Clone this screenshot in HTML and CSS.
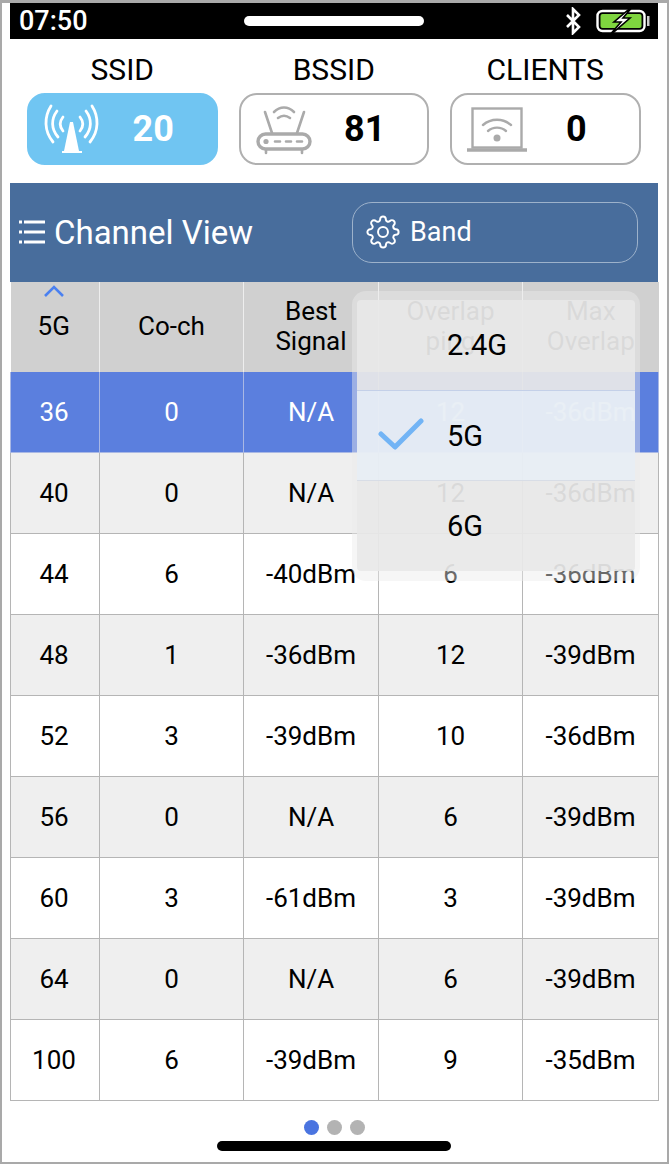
FILE: index.html
```html
<!DOCTYPE html>
<html lang="en">
<head>
  <meta charset="UTF-8"/>
  <meta name="viewport" content="width=device-width, initial-scale=1.0"/>
  <title>Channel View</title>
  <link rel="stylesheet" href="styles.css">
</head>
<body>
  <div class="phone">
    <!-- status bar -->
    <div class="status-bar">
      <span class="clock">07:50</span>
      <span class="notch"></span>
      <div class="status-icons">
        <svg class="bt-icon" viewBox="0 0 16 28" fill="none" stroke="#fff" stroke-width="2.6">
          <path d="M2 8l12 12-6 6V2l6 6L2 20"/>
        </svg>
        <svg class="battery-icon" viewBox="0 0 54 32">
          <rect x="1.500" y="6" width="47" height="20" rx="5" fill="none" stroke="#fff" stroke-width="2.400"/>
          <rect x="4.500" y="9" width="41" height="14" rx="2" fill="#7fd53f"/>
          <rect x="51" y="11" width="2.500" height="10" fill="#ccc"/>
          <path d="M38 0L18 17h7L12 32 34 13h-7z" fill="#fff" stroke="#000" stroke-width="1.600"/>
        </svg>
      </div>
    </div>

    <!-- counters -->
    <div class="stats">
      <div class="stat">
        <div class="stat-label">SSID</div>
        <div class="stat-card active">
          <svg class="stat-icon" viewBox="0 0 60 56" fill="none" stroke="#fff" stroke-width="2.800" stroke-linecap="round">
            <path d="M7 5C0 16 0 30 9 41"/>
            <path d="M13 10C7 18 7 28 14 36"/>
            <path d="M19 16C15 21 15 25 19 30"/>
            <path d="M48 5C55 16 55 30 46 41"/>
            <path d="M42 10C48 18 48 28 41 36"/>
            <path d="M36 16C40 21 40 25 36 30"/>
            <path d="M26 21h3l6 29H20z" fill="#fff" stroke="none"/>
            <path d="M18 51h20" stroke-linecap="butt" stroke-width="2"/>
          </svg>
          <span class="stat-value">20</span>
        </div>
      </div>
      <div class="stat">
        <div class="stat-label">BSSID</div>
        <div class="stat-card">
          <svg class="stat-icon" viewBox="0 0 60 56" fill="none" stroke="#aaa" stroke-width="2.600" stroke-linecap="round">
            <path d="M18 11c6-6 14-6 20 0"/>
            <path d="M22 17c4-3 8-3 12 0"/>
            <path d="M9 11l7 21"/>
            <path d="M48 11l-7 21"/>
            <rect x="2" y="33" width="52" height="15" rx="7.500" stroke-width="3.400"/>
            <circle cx="10" cy="40.500" r="2.600" fill="#aaa" stroke="none"/>
            <path d="M19 40.500h5M30 40.500h5M41 40.500h5"/>
            <path d="M10 49v3M46 49v3"/>
          </svg>
          <span class="stat-value">81</span>
        </div>
      </div>
      <div class="stat">
        <div class="stat-label">CLIENTS</div>
        <div class="stat-card">
          <svg class="stat-icon" viewBox="0 0 60 56" fill="none" stroke="#aaa" stroke-width="2.400" stroke-linecap="round">
            <rect x="5.500" y="7.500" width="49" height="39" stroke-linecap="butt"/>
            <path d="M0 49h60" stroke-width="3.400" stroke-linecap="butt"/>
            <path d="M16 24c8-7 20-7 28 0"/>
            <path d="M21 30c5-4.500 13-4.500 18 0"/>
            <circle cx="30" cy="37" r="3.500" fill="#aaa" stroke="none"/>
          </svg>
          <span class="stat-value">0</span>
        </div>
      </div>
    </div>

    <!-- title bar -->
    <div class="title-bar">
      <div class="title">
        <svg class="list-icon" viewBox="0 0 26 24" fill="none" stroke="#fff" stroke-width="3">
          <path d="M5 2h21M5 12h21M5 22h21"/>
          <path d="M0 2h3M0 12h3M0 22h3"/>
        </svg>
        <span>Channel View</span>
      </div>
      <div class="band-btn">
        <svg class="gear-icon" viewBox="0 0 24 24" fill="none" stroke="#fff" stroke-width="1.400" stroke-linejoin="round">
          <circle cx="12" cy="12" r="3.500"/>
          <path d="M19.4 15a1.65 1.65 0 0 0 .33 1.82l.06.06a2 2 0 0 1 0 2.83 2 2 0 0 1-2.83 0l-.06-.06a1.65 1.65 0 0 0-1.82-.33 1.65 1.65 0 0 0-1 1.51V21a2 2 0 0 1-2 2 2 2 0 0 1-2-2v-.09A1.65 1.65 0 0 0 9 19.4a1.65 1.65 0 0 0-1.82.33l-.06.06a2 2 0 0 1-2.83 0 2 2 0 0 1 0-2.83l.06-.06a1.65 1.65 0 0 0 .33-1.82 1.65 1.65 0 0 0-1.51-1H3a2 2 0 0 1-2-2 2 2 0 0 1 2-2h.09A1.65 1.65 0 0 0 4.6 9a1.65 1.65 0 0 0-.33-1.82l-.06-.06a2 2 0 0 1 0-2.83 2 2 0 0 1 2.83 0l.06.06a1.65 1.65 0 0 0 1.82.33H9a1.65 1.65 0 0 0 1-1.51V3a2 2 0 0 1 2-2 2 2 0 0 1 2 2v.09a1.65 1.65 0 0 0 1 1.51 1.65 1.65 0 0 0 1.82-.33l.06-.06a2 2 0 0 1 2.83 0 2 2 0 0 1 0 2.83l-.06.06a1.65 1.65 0 0 0-.33 1.82V9a1.65 1.65 0 0 0 1.51 1H21a2 2 0 0 1 2 2 2 2 0 0 1-2 2h-.09a1.65 1.65 0 0 0-1.51 1z"/>
        </svg>
        <span>Band</span>
      </div>
    </div>

    <!-- channel table + band menu on top -->
    <div class="table-wrap">
      <table class="channel-table">
        <colgroup>
          <col class="col-ch"><col class="col-co"><col class="col-best"><col class="col-overlap"><col class="col-max">
        </colgroup>
        <thead>
          <tr>
            <th class="sorted">
              <svg class="sort-icon" viewBox="0 0 20 12" fill="none" stroke="#4a80f0" stroke-width="2.600"><path d="M1 11l9-9 9 9"/></svg>
              5G
            </th>
            <th>Co-ch</th>
            <th>Best<br>Signal</th>
            <th>Overlap<br>ping</th>
            <th>Max<br>Overlap</th>
          </tr>
        </thead>
        <tbody>
          <tr class="selected"><td>36</td><td>0</td><td>N/A</td><td>12</td><td>-36dBm</td></tr>
          <tr><td>40</td><td>0</td><td>N/A</td><td>12</td><td>-36dBm</td></tr>
          <tr><td>44</td><td>6</td><td>-40dBm</td><td>6</td><td>-36dBm</td></tr>
          <tr><td>48</td><td>1</td><td>-36dBm</td><td>12</td><td>-39dBm</td></tr>
          <tr><td>52</td><td>3</td><td>-39dBm</td><td>10</td><td>-36dBm</td></tr>
          <tr><td>56</td><td>0</td><td>N/A</td><td>6</td><td>-39dBm</td></tr>
          <tr><td>60</td><td>3</td><td>-61dBm</td><td>3</td><td>-39dBm</td></tr>
          <tr><td>64</td><td>0</td><td>N/A</td><td>6</td><td>-39dBm</td></tr>
          <tr><td>100</td><td>6</td><td>-39dBm</td><td>9</td><td>-35dBm</td></tr>
        </tbody>
      </table>

      <div class="band-menu">
        <div class="band-list">
          <div class="band-item">2.4G</div>
          <div class="band-item checked">
            <svg class="check-icon" viewBox="0 0 46 32" fill="none" stroke="#72b4f5" stroke-width="5" stroke-linecap="round" stroke-linejoin="round">
              <path d="M3 16l14 13L43 3"/>
            </svg>
            5G
          </div>
          <div class="band-item">6G</div>
        </div>
      </div>
    </div>

    <div class="pager">
      <span class="dot on"></span>
      <span class="dot"></span>
      <span class="dot"></span>
    </div>
    <div class="home-bar"></div>
  </div>
</body>
</html>
```

FILE: styles.css
```css
* { box-sizing: border-box; font-family: Roboto, 'Liberation Sans', sans-serif; color: #000; }
html, body { margin: 0; background: #fff; }
.phone { width: 669px; height: 1164px; border: 2px solid #a9a9a9; border-top-width: 3px; padding: 0 9px 0 8px; background: #fff; overflow: hidden; }

.status-bar { height: 36px; background: #000; display: flex; align-items: center; padding: 0 8px 0 9px; }
.clock { color: #fff; font-size: 27px; font-weight: 500; width: 225px; }
.notch { width: 180px; height: 10px; border-radius: 5px; background: #fff; }
.status-icons { margin-left: auto; display: flex; align-items: center; gap: 15px; }
.bt-icon { width: 16px; height: 28px; }
.battery-icon { width: 54px; height: 32px; }

.stats { display: flex; gap: 21px; padding: 14px 17px 0; }
.stat { width: 190.5px; }
.stat-label { font-size: 30px; line-height: 34px; text-align: center; margin-bottom: 6px; }
.stat-card { height: 72px; border: 2px solid #b0b0b0; border-radius: 18px; display: flex; align-items: center; padding: 0 13px 0 15px; }
.stat-card.active { background: #70c5f2; border-color: #70c5f2; }
.stat-icon { width: 60px; height: 56px; flex: none; }
.stat-value { flex: 1; text-align: center; font-size: 36px; font-weight: 700; }
.active .stat-value { color: #fff; }

.title-bar { height: 99px; margin-top: 18px; background: #486d9c; display: flex; align-items: center; padding: 0 20px 1px 9px; }
.title { display: flex; align-items: center; gap: 9px; width: 333px; }
.title span { color: #fff; font-size: 33px; }
.list-icon { width: 26px; height: 24px; }
.band-btn { width: 286px; height: 61px; border: 1.5px solid #9db2cb; border-radius: 20px; display: flex; align-items: center; gap: 10px; padding-left: 13px; }
.band-btn span { color: #fff; font-size: 27px; }
.gear-icon { width: 34px; height: 34px; }

.table-wrap { position: relative; }
.channel-table { width: 648px; table-layout: fixed; border-collapse: collapse; }
.col-ch { width: 89px; }
.col-co { width: 144px; }
.col-best { width: 135px; }
.col-overlap { width: 144px; }
.col-max { width: 136px; }
.channel-table th { height: 90px; background: #d0d0d0; font-size: 26px; font-weight: 400; line-height: 30px; border-left: 1px solid #eee; padding: 0 0 2px; position: relative; }
.channel-table th:first-child { border-left: none; padding-right: 2px; }
.channel-table td { height: 81px; padding: 0; text-align: center; font-size: 26px; border: 1px solid #b5b5b5; }
.channel-table td:first-child { padding-right: 2px; }
.channel-table tbody tr:nth-child(even) td { background: #efefef; }
.channel-table tr.selected td { height: 80px; background: #5b7fde; color: #fff; border-color: #a9b8e4; border-top: none; }
.sort-icon { position: absolute; left: 33px; top: 3px; width: 20px; height: 12px; }

.band-menu { position: absolute; left: 342px; top: 9px; width: 288px; height: 290px; padding: 9px 5px 10px; border-radius: 14px; background: rgba(235,235,235,.45); }
.band-list { height: 100%; border-radius: 4px; background: rgba(232,232,232,.88); }
.band-item { height: 90px; display: flex; align-items: center; padding-left: 90px; font-size: 29px; position: relative; }
.band-item.checked { height: 91px; padding-top: 1px; background: rgba(232,243,255,.5); border-top: 1px solid #c4d0e8; border-bottom: 1px solid #d8dde6; }
.check-icon { position: absolute; left: 21px; top: 27px; width: 46px; height: 32px; }

.pager { display: flex; justify-content: center; gap: 8px; margin-top: 19px; }
.dot { width: 15px; height: 15px; border-radius: 50%; background: #b3b3b3; }
.dot.on { background: #4a74e0; }
.home-bar { width: 234px; height: 10px; border-radius: 5px; background: #000; margin: 6px auto 0; }
```
